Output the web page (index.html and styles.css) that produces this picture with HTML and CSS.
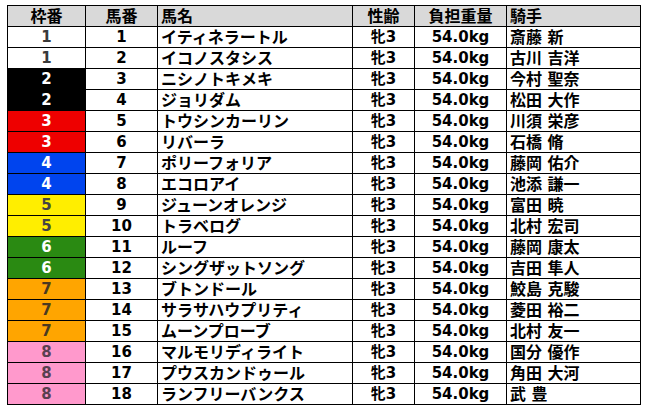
FILE: index.html
```html
<!DOCTYPE html>
<html lang="ja">
<head>
<meta charset="utf-8">
<link rel="stylesheet" href="styles.css">
</head>
<body>
<table class="entries">
<colgroup>
<col class="c-waku"><col class="c-uma"><col class="c-name"><col class="c-sex"><col class="c-wt"><col class="c-jockey">
</colgroup>
<thead>
<tr><th>枠番</th><th>馬番</th><th class="left">馬名</th><th>性齢</th><th>負担重量</th><th class="left">騎手</th></tr>
</thead>
<tbody>
<tr><td class="w1">1</td><td>1</td><td class="left">イティネラートル</td><td>牝3</td><td>54.0kg</td><td class="left">斎藤 新</td></tr>
<tr><td class="w1">1</td><td>2</td><td class="left">イコノスタシス</td><td>牝3</td><td>54.0kg</td><td class="left">古川 吉洋</td></tr>
<tr><td class="w2">2</td><td>3</td><td class="left">ニシノトキメキ</td><td>牝3</td><td>54.0kg</td><td class="left">今村 聖奈</td></tr>
<tr><td class="w2">2</td><td>4</td><td class="left">ジョリダム</td><td>牝3</td><td>54.0kg</td><td class="left">松田 大作</td></tr>
<tr><td class="w3">3</td><td>5</td><td class="left">トウシンカーリン</td><td>牝3</td><td>54.0kg</td><td class="left">川須 栄彦</td></tr>
<tr><td class="w3">3</td><td>6</td><td class="left">リバーラ</td><td>牝3</td><td>54.0kg</td><td class="left">石橋 脩</td></tr>
<tr><td class="w4">4</td><td>7</td><td class="left">ポリーフォリア</td><td>牝3</td><td>54.0kg</td><td class="left">藤岡 佑介</td></tr>
<tr><td class="w4">4</td><td>8</td><td class="left">エコロアイ</td><td>牝3</td><td>54.0kg</td><td class="left">池添 謙一</td></tr>
<tr><td class="w5">5</td><td>9</td><td class="left">ジューンオレンジ</td><td>牝3</td><td>54.0kg</td><td class="left">富田 暁</td></tr>
<tr><td class="w5">5</td><td>10</td><td class="left">トラベログ</td><td>牝3</td><td>54.0kg</td><td class="left">北村 宏司</td></tr>
<tr><td class="w6">6</td><td>11</td><td class="left">ルーフ</td><td>牝3</td><td>54.0kg</td><td class="left">藤岡 康太</td></tr>
<tr><td class="w6">6</td><td>12</td><td class="left">シングザットソング</td><td>牝3</td><td>54.0kg</td><td class="left">吉田 隼人</td></tr>
<tr><td class="w7">7</td><td>13</td><td class="left">ブトンドール</td><td>牝3</td><td>54.0kg</td><td class="left">鮫島 克駿</td></tr>
<tr><td class="w7">7</td><td>14</td><td class="left">サラサハウプリティ</td><td>牝3</td><td>54.0kg</td><td class="left">菱田 裕二</td></tr>
<tr><td class="w7">7</td><td>15</td><td class="left">ムーンプローブ</td><td>牝3</td><td>54.0kg</td><td class="left">北村 友一</td></tr>
<tr><td class="w8">8</td><td>16</td><td class="left">マルモリディライト</td><td>牝3</td><td>54.0kg</td><td class="left">国分 優作</td></tr>
<tr><td class="w8">8</td><td>17</td><td class="left">プウスカンドゥール</td><td>牝3</td><td>54.0kg</td><td class="left">角田 大河</td></tr>
<tr><td class="w8">8</td><td>18</td><td class="left">ランフリーバンクス</td><td>牝3</td><td>54.0kg</td><td class="left">武 豊</td></tr>
</tbody>
</table>
</body>
</html>
```
FILE: styles.css
```css
html, body {
  margin: 0;
  padding: 0;
  background: #ffffff;
}
body {
  padding: 5px 0 0 7px;
}
.entries {
  border-collapse: collapse;
  table-layout: fixed;
  width: 633px;
  font-family: "DejaVu Sans", "Noto Sans CJK JP", sans-serif;
  font-weight: bold;
  font-size: 15px;
  color: #000;
}
.c-waku { width: 78px; }
.c-uma { width: 72px; }
.c-name { width: 195px; }
.c-sex { width: 62px; }
.c-wt { width: 92px; }
.c-jockey { width: 134px; }
.entries tr {
  height: 21px;
}
.entries th,
.entries td {
  border: 1px solid #000;
  padding: 0 3px;
  text-align: center;
  line-height: 19px;
  white-space: nowrap;
  overflow: hidden;
}
.entries th {
  background: #d9d9d9;
  font-weight: bold;
  font-size: 16px;
}
.entries .left {
  text-align: left;
  font-size: 16px;
}
.w1 { background: #ffffff; color: #3a3a3a; }
.w2 { background: #000000; color: #fff; }
.w3 { background: #ee0000; color: #fff; }
.w4 { background: #0044ee; color: #fff; }
.w5 { background: #ffee00; color: #444; }
.w6 { background: #2a8a12; color: #fff; }
.w7 { background: #ffa500; color: #4a3a20; }
.w8 { background: #ff99cc; color: #5a4050; }
```
